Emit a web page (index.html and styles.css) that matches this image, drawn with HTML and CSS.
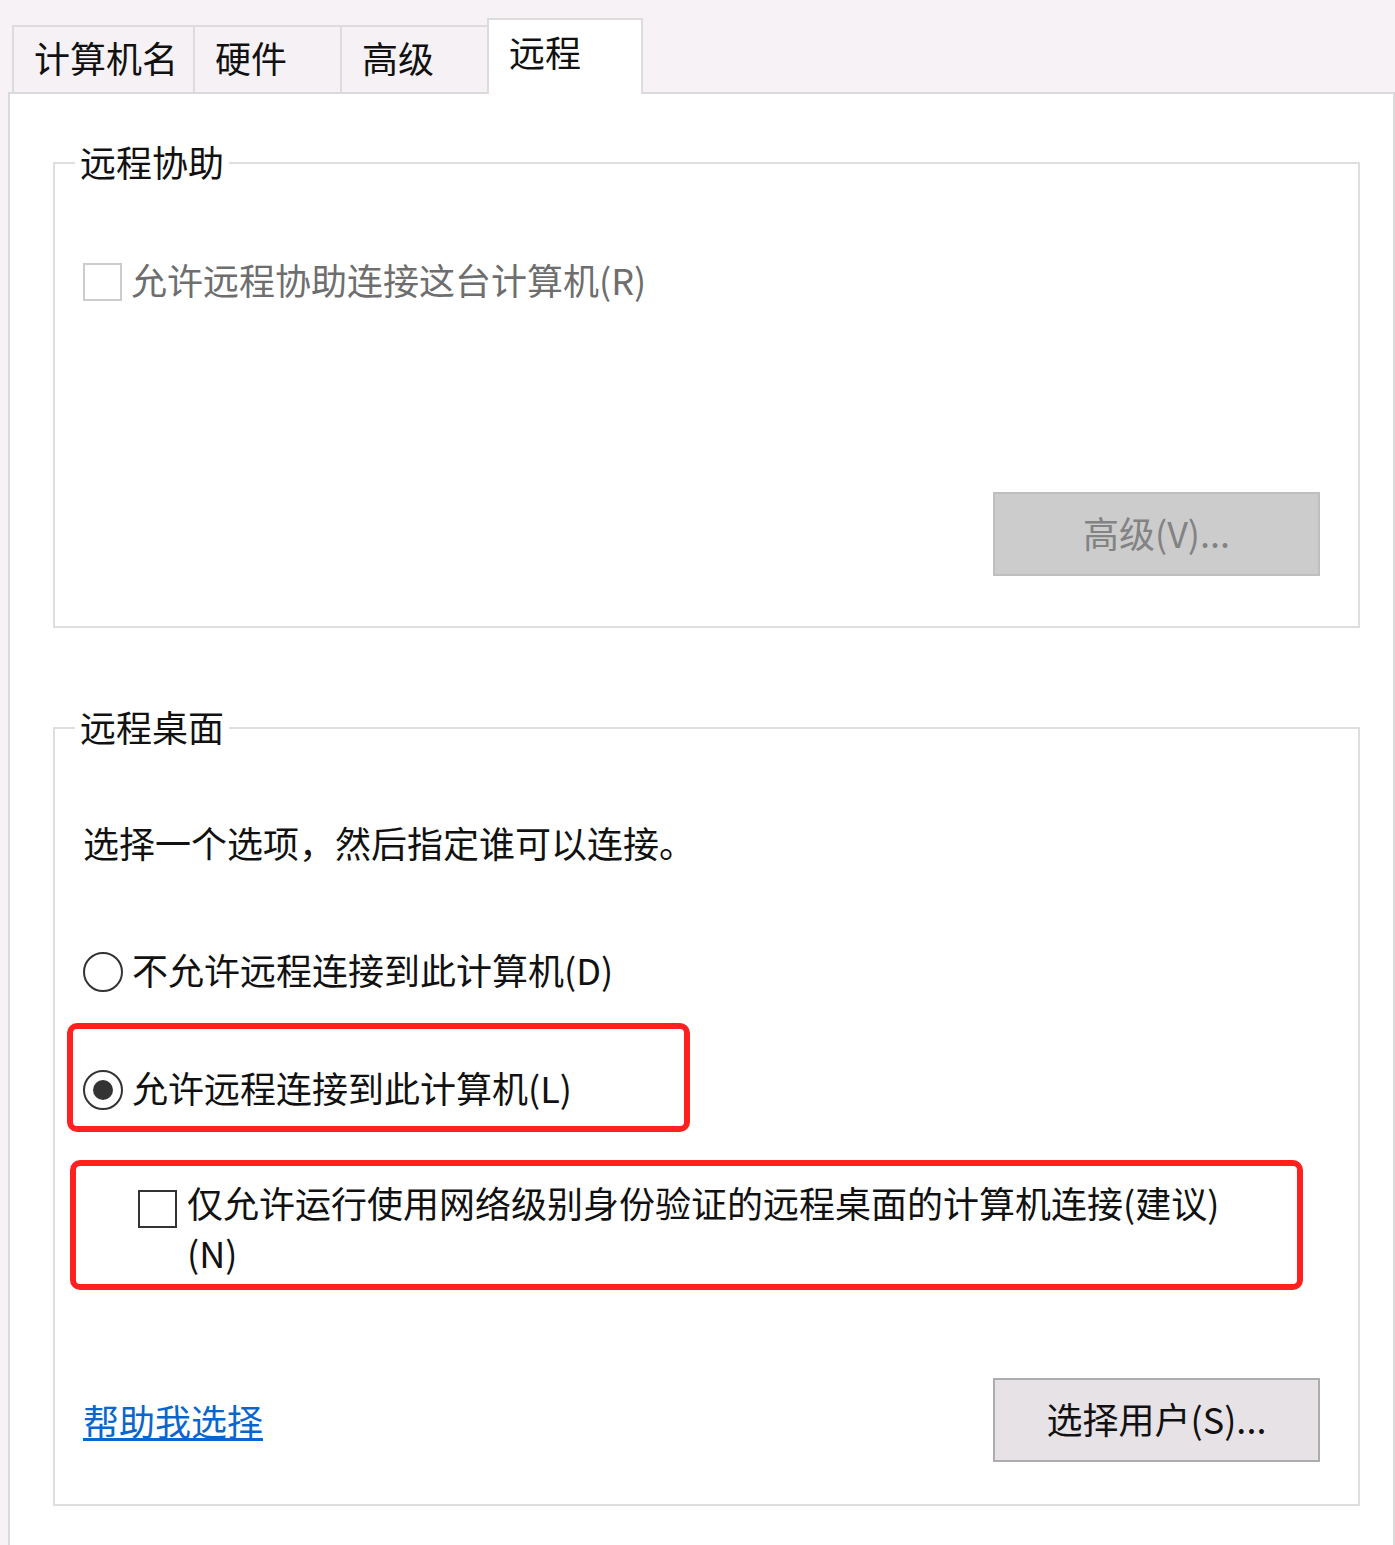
FILE: index.html
```html
<!DOCTYPE html>
<html lang="zh-CN">
<head>
<meta charset="utf-8">
<title>系统属性 - 远程</title>
<link rel="stylesheet" href="styles.css">
</head>
<body>
<div class="dialog">
  <div class="tabs">
    <div class="tab tab-first">计算机名</div>
    <div class="tab tab-std">硬件</div>
    <div class="tab tab-std">高级</div>
    <div class="tab tab-active">远程</div>
  </div>
  <div class="panel">
    <fieldset class="group group-assist">
      <legend class="group-title">远程协助</legend>
      <div class="row row-first row-disabled">
        <span class="check check-disabled"></span>
        <span class="label">允许远程协助连接这台计算机(R)</span>
      </div>
      <div class="actions">
        <button class="btn btn-disabled" type="button">高级(V)...</button>
      </div>
    </fieldset>

    <fieldset class="group group-desktop">
      <legend class="group-title">远程桌面</legend>
      <div class="desc">选择一个选项，然后指定谁可以连接。</div>
      <div class="row row-radio1">
        <span class="radio"></span>
        <span class="label">不允许远程连接到此计算机(D)</span>
      </div>
      <div class="mark mark-allow">
        <div class="row">
          <span class="radio radio-checked"></span>
          <span class="label">允许远程连接到此计算机(L)</span>
        </div>
      </div>
      <div class="mark mark-nla">
        <div class="row row-wrap">
          <span class="check check-nla"></span>
          <span class="label label-multi">仅允许运行使用网络级别身份验证的远程桌面的计算机连接(建议)<br>(N)</span>
        </div>
      </div>
      <div class="bottom">
        <a class="link" href="#">帮助我选择</a>
        <button class="btn" type="button">选择用户(S)...</button>
      </div>
    </fieldset>
  </div>
</div>
</body>
</html>
```

FILE: styles.css
```css
html, body {
  margin: 0;
  padding: 0;
}

body {
  background: #f6f2f6;
  font-family: "Noto Sans CJK SC", "Noto Sans", sans-serif;
  font-size: 36px;
  color: #111;
  overflow: hidden;
}

.dialog {
  padding-top: 18px;
}

.tabs {
  display: flex;
  align-items: flex-end;
  height: 74px;
  padding-left: 12px;
}

.tab {
  box-sizing: border-box;
  height: 67px;
  line-height: 60px;
  padding-left: 20px;
  background: #f5f1f5;
  border: 2px solid #dedbde;
  border-bottom: 0;
  margin-right: -2px;
  white-space: nowrap;
  color: #111;
}

.tab-first {
  width: 183px;
}

.tab-std {
  width: 149px;
}

.tab-active {
  position: relative;
  z-index: 1;
  width: 156px;
  height: 76px;
  margin-bottom: -2px;
  line-height: 62px;
  background: #ffffff;
  border-color: #dcdcdc;
}

.panel {
  margin-left: 8px;
  background: #ffffff;
  border: 2px solid #dadada;
  padding: 47px 33px 80px 43px;
}

.group {
  margin: 0;
  min-width: 0;
  border: 2px solid #dedede;
  padding: 0 38px 0 28px;
}

.group-assist {
  padding-bottom: 50px;
}

.group-desktop {
  margin-top: 78px;
  padding-bottom: 42px;
}

.group-title {
  padding: 0 5px 4px;
  margin-left: -8px;
  line-height: 40px;
  color: #111;
}

.row {
  display: flex;
  align-items: center;
  gap: 9px;
  height: 44px;
  white-space: nowrap;
}

.label {
  line-height: 38px;
  padding-bottom: 6px;
}

.row-first {
  margin-top: 75px;
}

.row-disabled .label {
  color: #6e6e6e;
}

.row-radio1 {
  margin-top: 83px;
}

.row-wrap {
  align-items: flex-start;
  gap: 10px;
  height: auto;
}

.label-multi {
  line-height: 50px;
  padding-bottom: 0;
  margin-top: -3px;
}

.desc {
  margin-top: 73px;
  line-height: 38px;
  padding-bottom: 6px;
}

.check {
  box-sizing: border-box;
  flex: none;
  width: 39px;
  height: 38px;
  border: 2px solid #333333;
  background: #ffffff;
}

.check-disabled {
  border-color: #cccccc;
}

.check-nla {
  margin-top: 10px;
}

.radio {
  box-sizing: border-box;
  flex: none;
  width: 40px;
  height: 40px;
  border: 2px solid #333333;
  border-radius: 50%;
  background: #ffffff;
  display: flex;
  align-items: center;
  justify-content: center;
}

.radio-checked::after {
  content: "";
  width: 20px;
  height: 20px;
  border-radius: 50%;
  background: #333333;
}

.mark {
  box-sizing: border-box;
  border: 6px solid #ff2020;
  border-radius: 10px;
}

.mark-allow {
  margin-top: 29px;
  margin-left: -16px;
  width: 623px;
  padding: 39px 0 14px 10px;
}

.mark-nla {
  margin-top: 28px;
  margin-left: -13px;
  width: 1233px;
  padding: 14px 0 7px 62px;
}

.actions {
  display: flex;
  justify-content: flex-end;
  margin-top: 188px;
}

.btn {
  box-sizing: border-box;
  width: 327px;
  height: 84px;
  font-family: inherit;
  font-size: 36px;
  color: #111;
  background: #e6e2e6;
  border: 2px solid #adadad;
  border-radius: 0;
  padding: 0 0 4px;
}

.btn-disabled {
  background: #cccccc;
  border-color: #bfbfbf;
  color: #838383;
}

.bottom {
  display: flex;
  justify-content: space-between;
  align-items: center;
  margin-top: 88px;
}

.link {
  color: #0a66cc;
  text-decoration: underline;
  line-height: 44px;
}
```
